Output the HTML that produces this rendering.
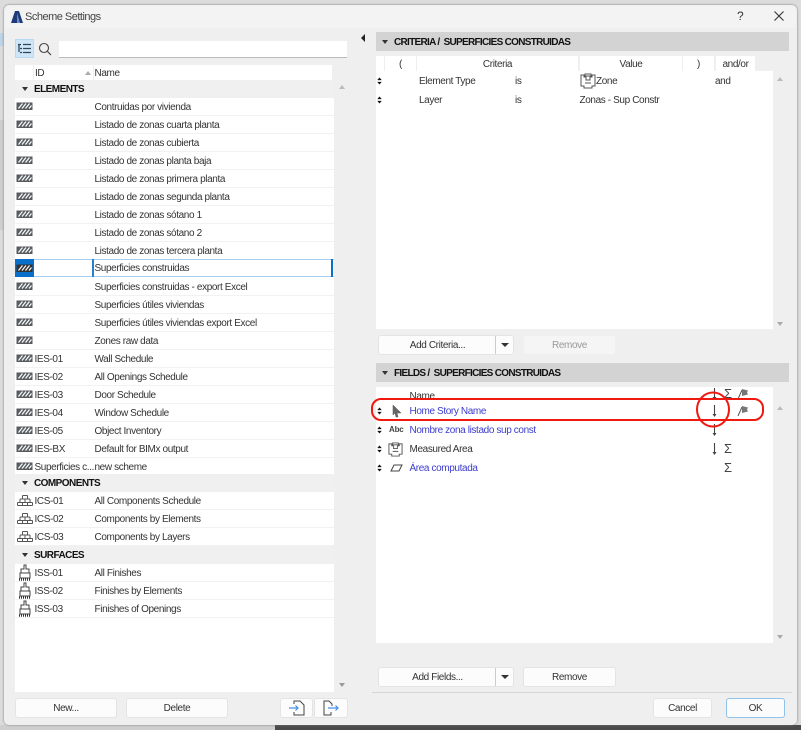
<!DOCTYPE html>
<html><head><meta charset="utf-8"><style>
*{box-sizing:border-box}
html,body{margin:0;padding:0}
body{width:801px;height:730px;position:relative;overflow:hidden;background:#dcdcdc;font-family:"Liberation Sans",sans-serif;font-size:10px;letter-spacing:-.38px;color:#333}
.a{position:absolute;white-space:nowrap}
#dlg{position:absolute;left:4px;top:5px;width:793px;height:720px;background:#efefef;border-radius:5px;box-shadow:0 0 2px #777}
.r{position:absolute;left:15px;width:319px;height:18px;background:#fff;border-bottom:1px solid #f2f2f2;line-height:19px}
.r svg{position:absolute;left:1px;top:0}
.r .i{position:absolute;left:19.5px}
.r .n{position:absolute;left:79.5px}
.s{position:absolute;left:15px;width:319px;height:18px;background:#f0f0f0;line-height:20px;font-weight:bold;color:#111;letter-spacing:-.55px}
.s b{position:absolute;left:19px}
.s i{position:absolute;left:7px;top:7px;border:3.5px solid transparent;border-top:4px solid #333;border-bottom:0}
.b{position:absolute;background:#fcfcfc;border:1px solid #e4e4e4;border-radius:3px;text-align:center;color:#333;height:20px;line-height:19px}
.h{position:absolute;left:376px;width:413px;height:19px;background:#d3d3d3;font-weight:bold;line-height:21px;color:#111;letter-spacing:-.7px}
.h span{position:absolute;left:18px}
.h i{position:absolute;left:6px;top:8px;border:3.5px solid transparent;border-top:4px solid #333;border-bottom:0}
.hc{position:absolute;background:#fff;text-align:center;top:56px;height:15px;line-height:17px}
.f{position:absolute;color:#3b3bd0}
.t{position:absolute;white-space:nowrap;line-height:17px}
.sg{font-size:13px;line-height:14px;color:#444;letter-spacing:0}
.ud{position:absolute;width:5px;height:8px}
</style></head><body>
<svg width="0" height="0" style="position:absolute"><defs>
<symbol id="hat" viewBox="0 0 17 18"><rect x="1" y="5" width="15" height="6.500" fill="#5a5f63" stroke="#55595c"/><path d="M2.500 10.500l4-5M6 10.500l4-5M9.500 10.500l4-5M13 10.500l2.500-3" stroke="#fff" stroke-width="1.200" fill="none"/></symbol>
<symbol id="hats" viewBox="0 0 17 18"><rect x="1" y="5" width="15" height="6.500" fill="#333" stroke="#333"/><path d="M2.500 10.500l4-5M6 10.500l4-5M9.500 10.500l4-5M13 10.500l2.500-3" stroke="#fff" stroke-width="1.200" fill="none"/></symbol>
<symbol id="brk" viewBox="0 0 17 18"><path d="M1.500 14.500h15M1.500 11.500h15M4 8h10M6.500 4.500h5M6.500 4.500v3.500M11.500 4.500v3.500M4 8v3.500M9 8v3.500M14 8v3.500M1.500 11.500v3M6.500 11.500v3M11.500 11.500v3M16.500 11.500v3" stroke="#555" fill="none"/></symbol>
<symbol id="bru" viewBox="0 0 17 18"><path d="M8 1h2v4h3v4h1v5H4V9h1V5h3z" fill="#fff" stroke="#444"/><path d="M4 9h10" stroke="#444"/><path d="M3 15.500h12" stroke="#333" stroke-width="2.500" stroke-dasharray="1 1"/></symbol>
<symbol id="ud" viewBox="0 0 5 9"><path d="M2.500 0.500L5 3.500H0zM2.500 8.500L0 5.500H5z" fill="#111"/></symbol>
<symbol id="zone" viewBox="0 0 16 16"><path d="M1 2h3v2h1V1h6v3h1V2h3v11h-3v2H4v-2H1z" fill="#fff" stroke="#555"/><path d="M6 3h4v4H6zM5 10h6" stroke="#555" fill="none"/></symbol>
<symbol id="flag" viewBox="0 0 13 12"><path d="M1 11L5 2" stroke="#555"/><path d="M5 1l6 1.500-1 2 1 2-6 1.500z" fill="#777"/></symbol>
<symbol id="dn" viewBox="0 0 7 14"><path d="M3.500 1v10" stroke="#444" stroke-width="1.100"/><path d="M1.500 10l2 3 2-3z" fill="#444"/></symbol>
</defs></svg>

<div class="a" style="left:0;top:120px;width:4px;height:110px;background:#cfcfcf"></div>
<div class="a" style="left:0;top:33px;width:4px;height:13px;background:#bcd3e8"></div>
<div class="a" style="left:0;top:725px;width:275px;height:5px;background:#cfcfcf"></div>
<div class="a" style="left:275px;top:725px;width:526px;height:5px;background:#4a4a4a"></div>
<div id="dlg"></div>
<div class="a" style="left:5px;top:6px;width:791px;height:22px;background:#f3f3f3;border-radius:5px 5px 0 0"></div>

<svg class="a" style="left:10px;top:10px" width="14" height="14" viewBox="0 0 14 14"><path d="M1 13L5 1h4l4 12z" fill="#1f3a7a"/><path d="M7 3l3 10H7z" fill="#6f8fc0"/></svg>
<div class="t" style="left:25px;top:10px;font-size:11px;line-height:14px;letter-spacing:-.5px;color:#444">Scheme Settings</div>
<div class="t" style="left:737px;top:9px;font-size:12px;line-height:14px;color:#333">?</div>
<svg class="a" style="left:773px;top:10px" width="12" height="12"><path d="M1.500 1.500l9 9M10.500 1.500l-9 9" stroke="#333" stroke-width="1.100"/></svg>

<div class="a" style="left:15px;top:39px;width:19px;height:19px;background:#cfe6f8;border:1px solid #b8d9f2"></div>
<svg class="a" style="left:17px;top:42px" width="15" height="13"><path d="M1 2.500h3M6 2.500h8M3 6.500h2M6 6.500h8M3 10.500h2M6 10.500h8M2 3v7" stroke="#345" stroke-width="1.300" fill="none"/></svg>
<svg class="a" style="left:38px;top:42px" width="14" height="14"><circle cx="6" cy="6" r="4.500" fill="none" stroke="#444" stroke-width="1.100"/><path d="M9.500 9.500l3.500 3.500" stroke="#444" stroke-width="1.200"/></svg>
<div class="a" style="left:59px;top:41px;width:288px;height:17px;background:#fff;border-bottom:1px solid #bbb"></div>
<div class="a" style="left:361px;top:34px;border:4px solid transparent;border-right:4px solid #222;border-left:0"></div>

<div class="a" style="left:15px;top:65px;width:317px;height:15px;background:#fff"></div>
<div class="a" style="left:33px;top:65px;width:1px;height:15px;background:#f0f0f0"></div>
<div class="a" style="left:93px;top:65px;width:1px;height:15px;background:#f0f0f0"></div>
<div class="t" style="left:35px;top:65px">ID</div>
<div class="a" style="left:85px;top:71px;border:3.5px solid transparent;border-bottom:4px solid #aaa;border-top:0"></div>
<div class="t" style="left:94.5px;top:65px">Name</div>
<div class="a" style="left:15px;top:98px;width:319px;height:594px;background:#fff"></div>
<div class="a" style="left:339px;top:85px;border:3.5px solid transparent;border-bottom:4px solid #bbb;border-top:0"></div>
<div class="a" style="left:339px;top:683px;border:3.5px solid transparent;border-top:4px solid #999;border-bottom:0"></div>

<div class="s" style="top:80px"><i></i><b>ELEMENTS</b></div>
<div class="r" style="top:98px"><svg width="17" height="18"><use href="#hat"/></svg><span class="n">Contruidas por vivienda</span></div>
<div class="r" style="top:116px"><svg width="17" height="18"><use href="#hat"/></svg><span class="n">Listado de zonas cuarta planta</span></div>
<div class="r" style="top:134px"><svg width="17" height="18"><use href="#hat"/></svg><span class="n">Listado de zonas cubierta</span></div>
<div class="r" style="top:152px"><svg width="17" height="18"><use href="#hat"/></svg><span class="n">Listado de zonas planta baja</span></div>
<div class="r" style="top:170px"><svg width="17" height="18"><use href="#hat"/></svg><span class="n">Listado de zonas primera planta</span></div>
<div class="r" style="top:188px"><svg width="17" height="18"><use href="#hat"/></svg><span class="n">Listado de zonas segunda planta</span></div>
<div class="r" style="top:206px"><svg width="17" height="18"><use href="#hat"/></svg><span class="n">Listado de zonas sótano 1</span></div>
<div class="r" style="top:224px"><svg width="17" height="18"><use href="#hat"/></svg><span class="n">Listado de zonas sótano 2</span></div>
<div class="r" style="top:242px"><svg width="17" height="18"><use href="#hat"/></svg><span class="n">Listado de zonas tercera planta</span></div>
<div class="r" style="top:259px;height:18px;border:1px solid #a6cdec;border-right:0;border-left:0;line-height:17px"><div class="a" style="left:0;top:-1px;width:19px;height:18px;background:#0a6fc9"></div><svg width="17" height="18" style="top:0"><use href="#hats"/></svg><div class="a" style="left:77px;top:-1px;width:2px;height:18px;background:#2a7fc9"></div><div class="a" style="right:1px;top:-1px;width:2px;height:18px;background:#0a6fc9"></div><span class="n">Superficies construidas</span></div>
<div class="r" style="top:278px"><svg width="17" height="18"><use href="#hat"/></svg><span class="n">Superficies construidas - export Excel</span></div>
<div class="r" style="top:296px"><svg width="17" height="18"><use href="#hat"/></svg><span class="n">Superficies útiles viviendas</span></div>
<div class="r" style="top:314px"><svg width="17" height="18"><use href="#hat"/></svg><span class="n">Superficies útiles viviendas export Excel</span></div>
<div class="r" style="top:332px"><svg width="17" height="18"><use href="#hat"/></svg><span class="n">Zones raw data</span></div>
<div class="r" style="top:350px"><svg width="17" height="18"><use href="#hat"/></svg><span class="i">IES-01</span><span class="n">Wall Schedule</span></div>
<div class="r" style="top:368px"><svg width="17" height="18"><use href="#hat"/></svg><span class="i">IES-02</span><span class="n">All Openings Schedule</span></div>
<div class="r" style="top:386px"><svg width="17" height="18"><use href="#hat"/></svg><span class="i">IES-03</span><span class="n">Door Schedule</span></div>
<div class="r" style="top:404px"><svg width="17" height="18"><use href="#hat"/></svg><span class="i">IES-04</span><span class="n">Window Schedule</span></div>
<div class="r" style="top:422px"><svg width="17" height="18"><use href="#hat"/></svg><span class="i">IES-05</span><span class="n">Object Inventory</span></div>
<div class="r" style="top:440px"><svg width="17" height="18"><use href="#hat"/></svg><span class="i">IES-BX</span><span class="n">Default for BIMx output</span></div>
<div class="r" style="top:458px"><svg width="17" height="18"><use href="#hat"/></svg><span class="i">Superficies c...</span><span class="n">new scheme</span></div>
<div class="s" style="top:474px"><i></i><b>COMPONENTS</b></div>
<div class="r" style="top:492px"><svg width="17" height="18" style="top:-1px"><use href="#brk"/></svg><span class="i">ICS-01</span><span class="n">All Components Schedule</span></div>
<div class="r" style="top:510px"><svg width="17" height="18" style="top:-1px"><use href="#brk"/></svg><span class="i">ICS-02</span><span class="n">Components by Elements</span></div>
<div class="r" style="top:528px"><svg width="17" height="18" style="top:-1px"><use href="#brk"/></svg><span class="i">ICS-03</span><span class="n">Components by Layers</span></div>
<div class="s" style="top:546px"><i></i><b>SURFACES</b></div>
<div class="r" style="top:564px"><svg width="17" height="18"><use href="#bru"/></svg><span class="i">ISS-01</span><span class="n">All Finishes</span></div>
<div class="r" style="top:582px"><svg width="17" height="18"><use href="#bru"/></svg><span class="i">ISS-02</span><span class="n">Finishes by Elements</span></div>
<div class="r" style="top:600px"><svg width="17" height="18"><use href="#bru"/></svg><span class="i">ISS-03</span><span class="n">Finishes of Openings</span></div>

<div class="b" style="left:15px;top:698px;width:102px">New...</div>
<div class="b" style="left:126px;top:698px;width:102px">Delete</div>
<div class="b" style="left:280px;top:698px;width:33px"></div>
<div class="b" style="left:314px;top:698px;width:34px"></div>
<svg class="a" style="left:288px;top:700px" width="18" height="16"><path d="M6 4V1h6l4 4v10H6v-3" fill="none" stroke="#444"/><path d="M1 8h9M7.500 5.500L10 8l-2.500 2.500" stroke="#4a90e8" fill="none" stroke-width="1.200"/></svg>
<svg class="a" style="left:322px;top:700px" width="18" height="16"><path d="M9 12v3H2V1h5l3 3v2" fill="none" stroke="#444"/><path d="M6 8h10M13.500 5.500L16 8l-2.500 2.500" stroke="#4a90e8" fill="none" stroke-width="1.200"/></svg>

<div class="h" style="top:32px"><i></i><span>CRITERIA /&nbsp; SUPERFICIES CONSTRUIDAS</span></div>
<div class="a" style="left:376px;top:71px;width:397px;height:258px;background:#fff"></div>
<div class="hc" style="left:376px;width:8px"></div>
<div class="hc" style="left:385px;width:31px">(</div>
<div class="hc" style="left:417px;width:161px">Criteria</div>
<div class="hc" style="left:580px;width:102px">Value</div>
<div class="hc" style="left:683px;width:31px">)</div>
<div class="hc" style="left:716px;width:39px">and/or</div>
<svg class="ud" style="left:377px;top:77px"><use href="#ud"/></svg>
<svg class="ud" style="left:377px;top:96px"><use href="#ud"/></svg>
<div class="t" style="left:419px;top:73px">Element Type</div>
<div class="t" style="left:515px;top:73px">is</div>
<svg class="a" style="left:580px;top:73px" width="16" height="16"><use href="#zone"/></svg>
<div class="t" style="left:596px;top:73px">Zone</div>
<div class="t" style="left:715px;top:73px">and</div>
<div class="t" style="left:419px;top:92px">Layer</div>
<div class="t" style="left:515px;top:92px">is</div>
<div class="t" style="left:579.5px;top:92px">Zonas - Sup Constr</div>
<div class="a" style="left:777px;top:77px;border:3.5px solid transparent;border-bottom:4px solid #bbb;border-top:0"></div>
<div class="a" style="left:777px;top:322px;border:3.5px solid transparent;border-top:4px solid #aaa;border-bottom:0"></div>

<div class="b" style="left:378px;top:335px;width:136px"><span style="position:absolute;left:0;width:117px;text-align:center">Add Criteria...</span></div>
<div class="a" style="left:495px;top:336px;width:1px;height:18px;background:#ccc"></div>
<div class="a" style="left:501px;top:343px;border:4px solid transparent;border-top:4px solid #333;border-bottom:0"></div>
<div class="b" style="left:523px;top:335px;width:93px;background:#f5f5f5;color:#999;border-color:#efefef">Remove</div>

<div class="h" style="top:363px"><i></i><span>FIELDS /&nbsp; SUPERFICIES CONSTRUIDAS</span></div>
<div class="a" style="left:376px;top:387px;width:397px;height:256px;background:#fff"></div>
<div class="t" style="left:409.5px;top:388px">Name</div>
<svg class="a" style="left:711px;top:387px" width="7" height="14"><use href="#dn"/></svg>
<div class="t sg" style="left:724px;top:387px">Σ</div>
<svg class="a" style="left:737px;top:388px" width="13" height="12"><use href="#flag"/></svg>
<svg class="ud" style="left:377px;top:407px"><use href="#ud"/></svg>
<svg class="ud" style="left:377px;top:426px"><use href="#ud"/></svg>
<svg class="ud" style="left:377px;top:445px"><use href="#ud"/></svg>
<svg class="ud" style="left:377px;top:464px"><use href="#ud"/></svg>
<svg class="a" style="left:391px;top:404px" width="12" height="14"><path d="M2 1l8 8H6l1 4-2 0-1-4-2 2z" fill="#666" stroke="#555" stroke-width=".5"/></svg>
<div class="t" style="left:389px;top:423px;font-size:8px;line-height:14px;font-weight:bold;letter-spacing:-.2px;color:#444">Abc</div>
<svg class="a" style="left:388px;top:442px" width="15" height="15"><use href="#zone"/></svg>
<svg class="a" style="left:390px;top:464px" width="13" height="8"><path d="M4 1h8L9 7H1z" fill="none" stroke="#444"/></svg>
<div class="t f" style="left:409.5px;top:403px">Home Story Name</div>
<div class="t f" style="left:409.5px;top:422px">Nombre zona listado sup const</div>
<div class="t" style="left:409.5px;top:441px">Measured Area</div>
<div class="t f" style="left:409.5px;top:460px">Área computada</div>
<svg class="a" style="left:711px;top:404px" width="7" height="14"><use href="#dn"/></svg>
<svg class="a" style="left:711px;top:423px" width="7" height="14"><use href="#dn"/></svg>
<svg class="a" style="left:711px;top:442px" width="7" height="14"><use href="#dn"/></svg>
<div class="t sg" style="left:724px;top:442px">Σ</div>
<div class="t sg" style="left:724px;top:461px">Σ</div>
<svg class="a" style="left:737px;top:405px" width="13" height="12"><use href="#flag"/></svg>
<div class="a" style="left:777px;top:406px;border:3.5px solid transparent;border-bottom:4px solid #bbb;border-top:0"></div>
<div class="a" style="left:777px;top:635px;border:3.5px solid transparent;border-top:4px solid #aaa;border-bottom:0"></div>

<svg class="a" style="left:0;top:0" width="801" height="730"><rect x="372" y="399" width="391" height="21" rx="9" fill="none" stroke="#f0190f" stroke-width="2"/><ellipse cx="713" cy="409.500" rx="16" ry="17" fill="none" stroke="#f0190f" stroke-width="2"/></svg>

<div class="b" style="left:378px;top:667px;width:136px"><span style="position:absolute;left:0;width:117px;text-align:center">Add Fields...</span></div>
<div class="a" style="left:495px;top:668px;width:1px;height:18px;background:#ccc"></div>
<div class="a" style="left:501px;top:675px;border:4px solid transparent;border-top:4px solid #333;border-bottom:0"></div>
<div class="b" style="left:523px;top:667px;width:93px">Remove</div>
<div class="a" style="left:372px;top:692px;width:420px;height:1px;background:#d5d5d5"></div>
<div class="b" style="left:653px;top:698px;width:59px">Cancel</div>
<div class="b" style="left:726px;top:698px;width:59px;border-color:#8fc3ea;background:#fbfbfb">OK</div>
</body></html>
